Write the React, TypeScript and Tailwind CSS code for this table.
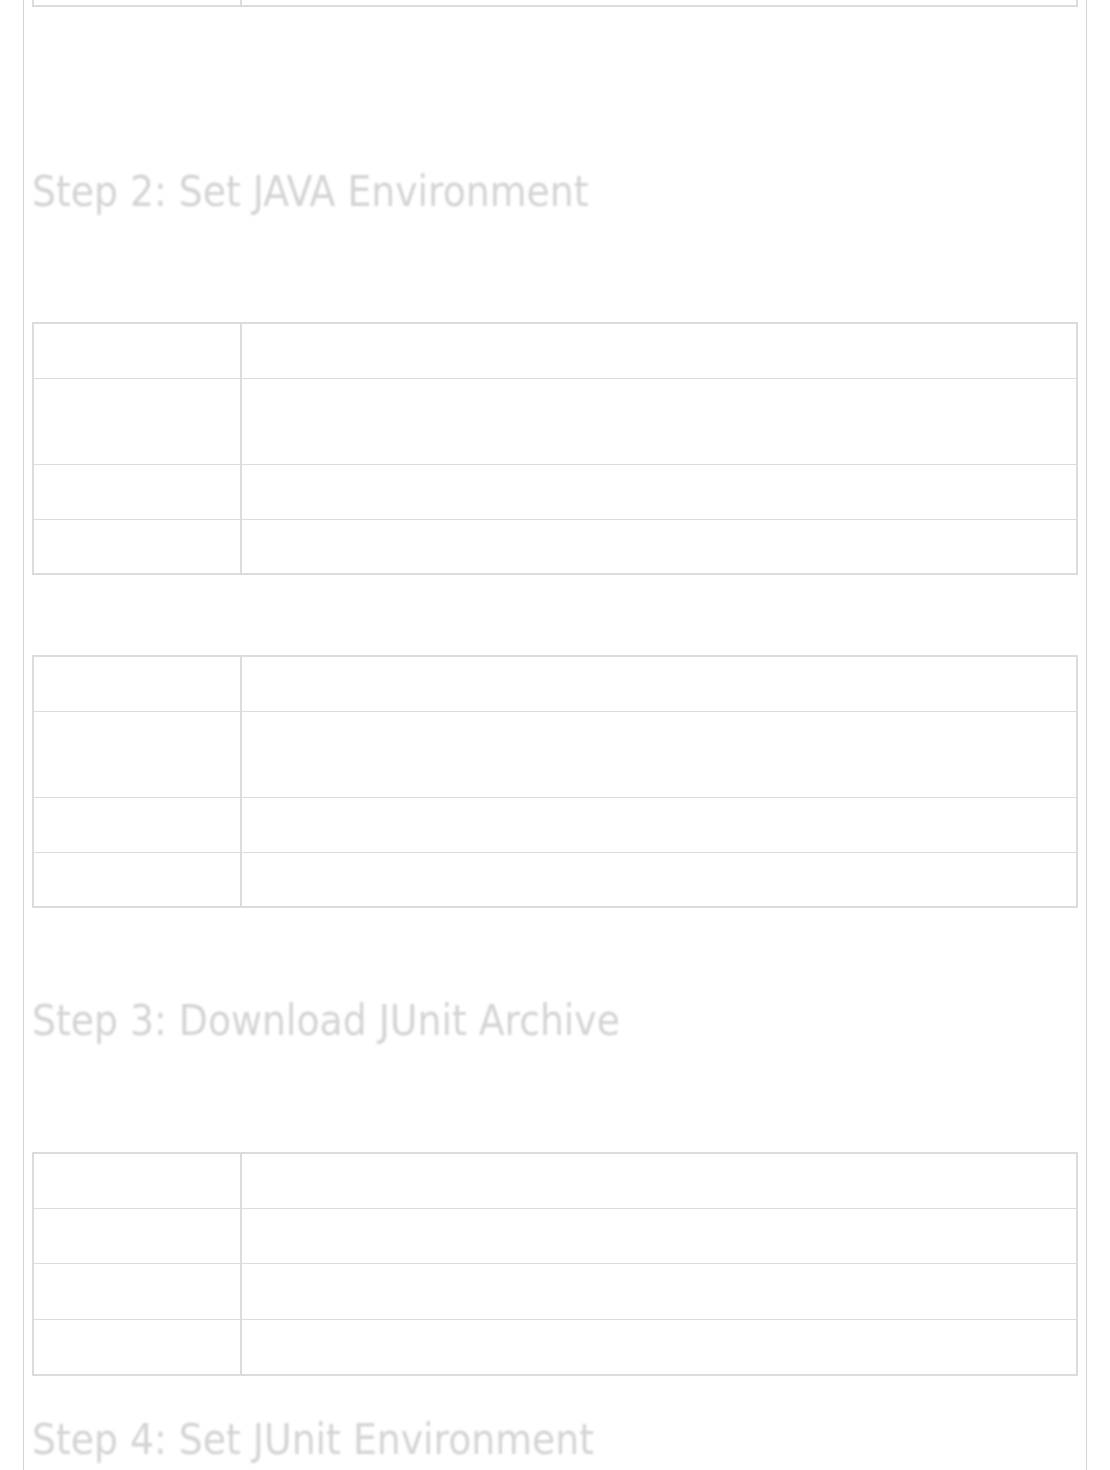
const line = "border-[#dcdcdc]";

function InfoTable({ rows }: { rows: number[] }) {
  return (
    <div className={`w-full border-2 ${line} bg-white`}>
      {rows.map((h, i) => (
        <div
          key={i}
          className={`flex ${i < rows.length - 1 ? `border-b ${line}` : ""}`}
          style={{ height: h }}
        >
          <div className={`w-[208px] shrink-0 border-r-2 ${line}`} />
          <div className="flex-1" />
        </div>
      ))}
    </div>
  );
}

function StepHeading({ children, className }: { children: string; className?: string }) {
  return (
    <h2
      className={`text-[42px] leading-[48px] font-normal text-[#d4d4d4] blur-[0.8px] ${className ?? ""}`}
      style={{ fontFamily: '"DejaVu Sans Condensed", "DejaVu Sans", Verdana, sans-serif' }}
    >
      {children}
    </h2>
  );
}

export default function App() {
  return (
    <div className="min-h-[1470px] bg-white">
      <div className="ml-[23px] w-[1064px] min-h-[1470px] border-x border-[#d4d4d4] px-2">
        <div className={`flex h-[7px] border-x-2 border-b-2 ${line}`}>
          <div className={`w-[208px] shrink-0 border-r-2 ${line}`} />
        </div>

        <StepHeading className="mt-[161px]">Step 2: Set JAVA Environment</StepHeading>

        <div className="mt-[106px]">
          <InfoTable rows={[55, 86, 55, 53]} />
        </div>

        <div className="mt-[80px]">
          <InfoTable rows={[55, 86, 55, 53]} />
        </div>

        <StepHeading className="mt-[89px]">Step 3: Download JUnit Archive</StepHeading>

        <div className="mt-[107px]">
          <InfoTable rows={[55, 55, 56, 54]} />
        </div>

        <StepHeading className="mt-[40px]">Step 4: Set JUnit Environment</StepHeading>
      </div>
    </div>
  );
}
